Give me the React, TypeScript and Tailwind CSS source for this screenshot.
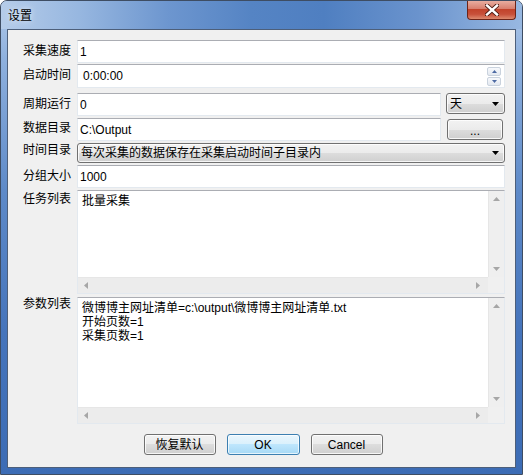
import React from "react";

const sans = "font-['Liberation_Sans','Noto_Sans_CJK_SC',sans-serif]";

function Tri({ dir, color = "#a6a6a6" }: { dir: "up" | "down" | "left" | "right"; color?: string }) {
  const pts: Record<string, string> = {
    up: "0,4 7,4 3.5,0",
    down: "0,0 7,0 3.5,4",
    left: "4,0 4,7 0,3.5",
    right: "0,0 0,7 4,3.5",
  };
  const vertical = dir === "up" || dir === "down";
  return (
    <svg width={vertical ? 7 : 4} height={vertical ? 4 : 7} className="block">
      <polygon points={pts[dir]} fill={color} />
    </svg>
  );
}

function Field({ children, className = "" }: { children?: React.ReactNode; className?: string }) {
  return (
    <div
      className={`flex items-center bg-white border border-[#e3e9ef] border-t-[#abadb3] pl-[2px] text-[12px] text-black ${className}`}
    >
      {children}
    </div>
  );
}

const btnBg =
  "bg-[linear-gradient(#f2f2f2,#ebebeb_50%,#dddddd_50%,#cfcfcf)] border border-[#707070] rounded-[3px] shadow-[inset_0_0_0_1px_rgba(255,255,255,0.8)]";

function Combo({ text, className = "" }: { text: string; className?: string }) {
  return (
    <div className={`flex items-center ${btnBg} pl-[3px] pr-[5px] text-[12px] text-black ${className}`}>
      <span className="flex-1 leading-[14px]">{text}</span>
      <Tri dir="down" color="#000" />
    </div>
  );
}

function ScrollBox({ lines, className = "" }: { lines: string[]; className?: string }) {
  return (
    <div
      className={`grid grid-cols-[1fr_16px] grid-rows-[1fr_16px] bg-white border border-[#e3e9ef] border-t-[#abadb3] ${className}`}
    >
      <div className="pl-[4px] pt-[3px] text-[12px] leading-[14px] text-black whitespace-pre">
        {lines.map((l) => (
          <div key={l}>{l}</div>
        ))}
      </div>
      <div className="flex flex-col items-center justify-between bg-[#efefef] border-l border-[#e6e6e6] py-[6px]">
        <Tri dir="up" />
        <Tri dir="down" />
      </div>
      <div className="flex items-center justify-between bg-[#ececec] border-t border-[#e6e6e6] pl-[6px] pr-[8px]">
        <Tri dir="left" />
        <Tri dir="right" />
      </div>
      <div className="bg-[#f0f0f0]" />
    </div>
  );
}

function Row({ label, pt, className = "", children }: { label: string; pt: string; className?: string; children: React.ReactNode }) {
  return (
    <div className={`flex ${className}`}>
      <div className={`w-[54px] shrink-0 text-[12px] leading-[14px] text-black ${pt}`}>{label}</div>
      <div className="flex flex-1 min-w-0">{children}</div>
    </div>
  );
}

export default function App() {
  return (
    <div
      className={`${sans} w-[523px] h-[475px] flex flex-col rounded-t-[7px] border border-[#3e4d63] bg-[linear-gradient(180deg,#b2cae9_0%,#8fb1de_12%,#5e8ac8_40%,#4574bb_70%,#3c6cb5_100%)] overflow-hidden`}
    >
      <div className="flex h-[28px] shrink-0 bg-[linear-gradient(90deg,#b5cce9_0%,#97b7e0_15%,#6d96cf_32%,#5584c4_48%,#4f7fc1_62%,#6a93cd_80%,#98b8e1_100%)]">
        <div className="pl-[7px] pt-[8px] text-[12px] leading-[14px] text-black [text-shadow:0_0_6px_rgba(255,255,255,0.9)]">
          设置
        </div>
        <div className="ml-auto mr-[6px] -mt-px h-[20px] w-[49px] flex items-center justify-center rounded-b-[4px] border border-t-0 border-[#6d2418] bg-[linear-gradient(#eab3a6,#d8806f_45%,#c2432b_50%,#c7503a_75%,#dd8a6f)]">
          <svg width="14" height="12" viewBox="0 0 14 12">
            <path d="M2 1.5 L12 10.5 M12 1.5 L2 10.5" stroke="#4a1a12" strokeWidth="4.2" strokeLinecap="square" />
            <path d="M2 1.5 L12 10.5 M12 1.5 L2 10.5" stroke="#ffffff" strokeWidth="2.4" strokeLinecap="square" />
          </svg>
        </div>
      </div>

      <div className="mx-[6px] h-[439px] shrink-0 flex flex-col border border-[#4d5f7a] bg-[#f0f0f0] pl-[15px] pr-[10px] pt-[10px]">
        <Row label="采集速度" pt="pt-[4px]" className="h-[23px]">
          <Field className="flex-1">1</Field>
        </Row>
        <Row label="启动时间" pt="pt-[4px]" className="mt-[1px] h-[24px]">
          <Field className="flex-1 pl-[5px]">
            <span className="flex-1">0:00:00</span>
            <div className="mr-[3px] flex flex-col gap-px">
              <div className="h-[9px] w-[14px] flex items-center justify-center rounded-[2px] border border-[#c9d2dd] bg-[linear-gradient(#f7f9fc,#e3e8f0)]">
                <svg width="5" height="3"><polygon points="0,3 5,3 2.5,0" fill="#4d6aa3" /></svg>
              </div>
              <div className="h-[9px] w-[14px] flex items-center justify-center rounded-[2px] border border-[#c9d2dd] bg-[linear-gradient(#f7f9fc,#e3e8f0)]">
                <svg width="5" height="3"><polygon points="0,0 5,0 2.5,3" fill="#4d6aa3" /></svg>
              </div>
            </div>
          </Field>
        </Row>
        <Row label="周期运行" pt="pt-[4px]" className="mt-[5px] h-[23px]">
          <Field className="flex-1">0</Field>
          <Combo text="天" className="ml-[5px] w-[59px] h-[21px]" />
        </Row>
        <Row label="数据目录" pt="pt-[3px]" className="mt-[2px] h-[23px]">
          <Field className="flex-1">C:\Output</Field>
          <div
            className={`ml-[6px] mr-[2px] mt-px w-[56px] h-[21px] flex items-end justify-center pb-[2px] ${btnBg} text-[12px] leading-[12px] text-black`}
          >
            ...
          </div>
        </Row>
        <Row label="时间目录" pt="pt-0" className="mt-[2px] h-[20px]">
          <Combo text="每次采集的数据保存在采集启动时间子目录内" className="flex-1" />
        </Row>
        <Row label="分组大小" pt="pt-[4px]" className="mt-[2px] h-[23px]">
          <Field className="flex-1">1000</Field>
        </Row>
        <Row label="任务列表" pt="pt-[2px]" className="mt-[2px] h-[104px]">
          <ScrollBox className="flex-1" lines={["批量采集"]} />
        </Row>
        <Row label="参数列表" pt="pt-0" className="mt-[3px] h-[127px]">
          <ScrollBox
            className="flex-1"
            lines={["微博博主网址清单=c:\\output\\微博博主网址清单.txt", "开始页数=1", "采集页数=1"]}
          />
        </Row>
        <div className="mt-[10px] flex justify-center gap-[11px] pr-[2px] text-[12px] text-black">
          <div className={`w-[72px] h-[21px] flex items-center justify-center ${btnBg}`}>恢复默认</div>
          <div className="w-[73px] h-[21px] flex items-center justify-center rounded-[3px] border border-[#3c7fb1] bg-[linear-gradient(#eaf6fd,#d9f0fc_50%,#bee6fd_50%,#a7d9f5)] shadow-[inset_0_0_0_1px_rgba(255,255,255,0.7)]">
            OK
          </div>
          <div className={`w-[72px] h-[21px] flex items-center justify-center ${btnBg}`}>Cancel</div>
        </div>
      </div>
    </div>
  );
}
